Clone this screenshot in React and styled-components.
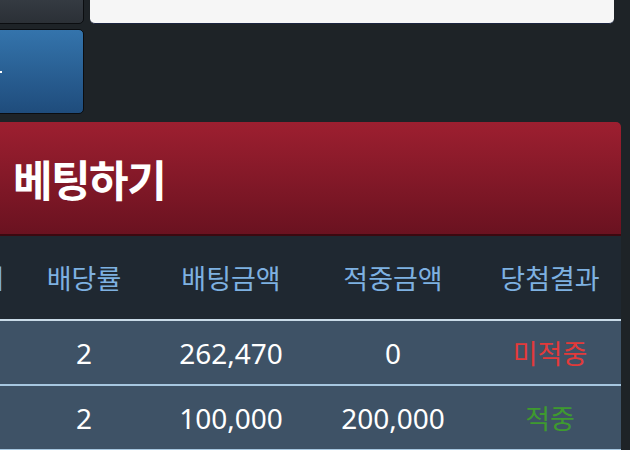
import styled, { createGlobalStyle } from "styled-components";

const GlobalStyle = createGlobalStyle`
  html, body {
    margin: 0;
    padding: 0;
    background: #1e2327;
    overflow: hidden;
  }
  body {
    font-family: "Noto Sans", "Noto Sans CJK KR", sans-serif;
  }
`;

// A página aparece recortada: o conteúdo começa fora da tela à esquerda e acima.
const Page = styled.div`
  width: 742px;
  margin: -20px 0 0 -112px;
  display: flex;
  flex-direction: column;
`;

const SearchBar = styled.div`
  display: grid;
  grid-template-columns: 196px 1fr;
  grid-template-rows: 44px 85px;
  column-gap: 6px;
  row-gap: 5px;
  padding-right: 16px;
`;

const DarkButton = styled.div`
  background: linear-gradient(#3c434b, #2b3036);
  border: 1px solid #0b0d10;
  border-radius: 5px;
`;

const SearchInput = styled.div`
  background: #f6f6f6;
  border-bottom: 1px solid #1b2440;
  border-radius: 5px;
`;

const BlueButton = styled.div`
  background: linear-gradient(#3474ac, #1f4c7c);
  border: 1px solid #0b0d10;
  border-radius: 5px;
  display: flex;
  align-items: center;
  justify-content: flex-end;
  padding-right: 81px;
  box-sizing: border-box;

  &::after {
    content: "";
    width: 4px;
    height: 2px;
    background: #fff;
  }
`;

const SectionTitle = styled.h2`
  margin: 8px 9px 0 0;
  height: 114px;
  box-sizing: border-box;
  padding-left: 125px;
  display: flex;
  align-items: center;
  background: linear-gradient(#9d1f30, #6a1220);
  border-bottom: 2px solid #3b0910;
  border-radius: 5px 5px 0 0;
  color: #fff;
  font-family: "Noto Sans CJK KR", sans-serif;
  font-size: 43px;
  font-weight: 700;
  letter-spacing: -1.5px;
`;

const Table = styled.div`
  margin-right: 9px;
  display: flex;
  flex-direction: column;
`;

const Row = styled.div`
  display: grid;
  grid-template-columns: 125px 142px 152px 172px 142px;
  height: ${(props) => props.$height}px;
  background: ${(props) => (props.$head ? "#1f2831" : "#3e5266")};
  border-bottom: 2px solid ${(props) => (props.$head ? "#c9dbe8" : "#a7c7e0")};
  align-items: center;
  text-align: center;
`;

const HeadCell = styled.div`
  color: #7eb1e1;
  font-family: "Noto Sans CJK KR", sans-serif;
  font-size: 27px;
  white-space: nowrap;

  &:first-child {
    padding-left: 9px;
  }
`;

const Cell = styled.div`
  color: #fff;
  font-size: 28px;
`;

const Result = styled.div`
  color: ${(props) => (props.$win ? "#3e9a2f" : "#e23a3a")};
  font-family: "Noto Sans CJK KR", sans-serif;
  font-size: 27px;
`;

const headers = ["경기일시", "배당률", "배팅금액", "적중금액", "당첨결과"];

const bets = [
  { pick: "", odds: "2", amount: "262,470", payout: "0", win: false },
  { pick: "", odds: "2", amount: "100,000", payout: "200,000", win: true },
];

export default function App() {
  return (
    <>
      <GlobalStyle />
      <Page>
        <SearchBar>
          <DarkButton />
          <SearchInput />
          <BlueButton />
        </SearchBar>

        <SectionTitle>베팅하기</SectionTitle>

        <Table>
          <Row $head $height={83}>
            {headers.map((h) => (
              <HeadCell key={h}>{h}</HeadCell>
            ))}
          </Row>
          {bets.map((b, i) => (
            <Row key={i} $height={63}>
              <Cell>{b.pick}</Cell>
              <Cell>{b.odds}</Cell>
              <Cell>{b.amount}</Cell>
              <Cell>{b.payout}</Cell>
              <Result $win={b.win}>{b.win ? "적중" : "미적중"}</Result>
            </Row>
          ))}
        </Table>
      </Page>
    </>
  );
}
